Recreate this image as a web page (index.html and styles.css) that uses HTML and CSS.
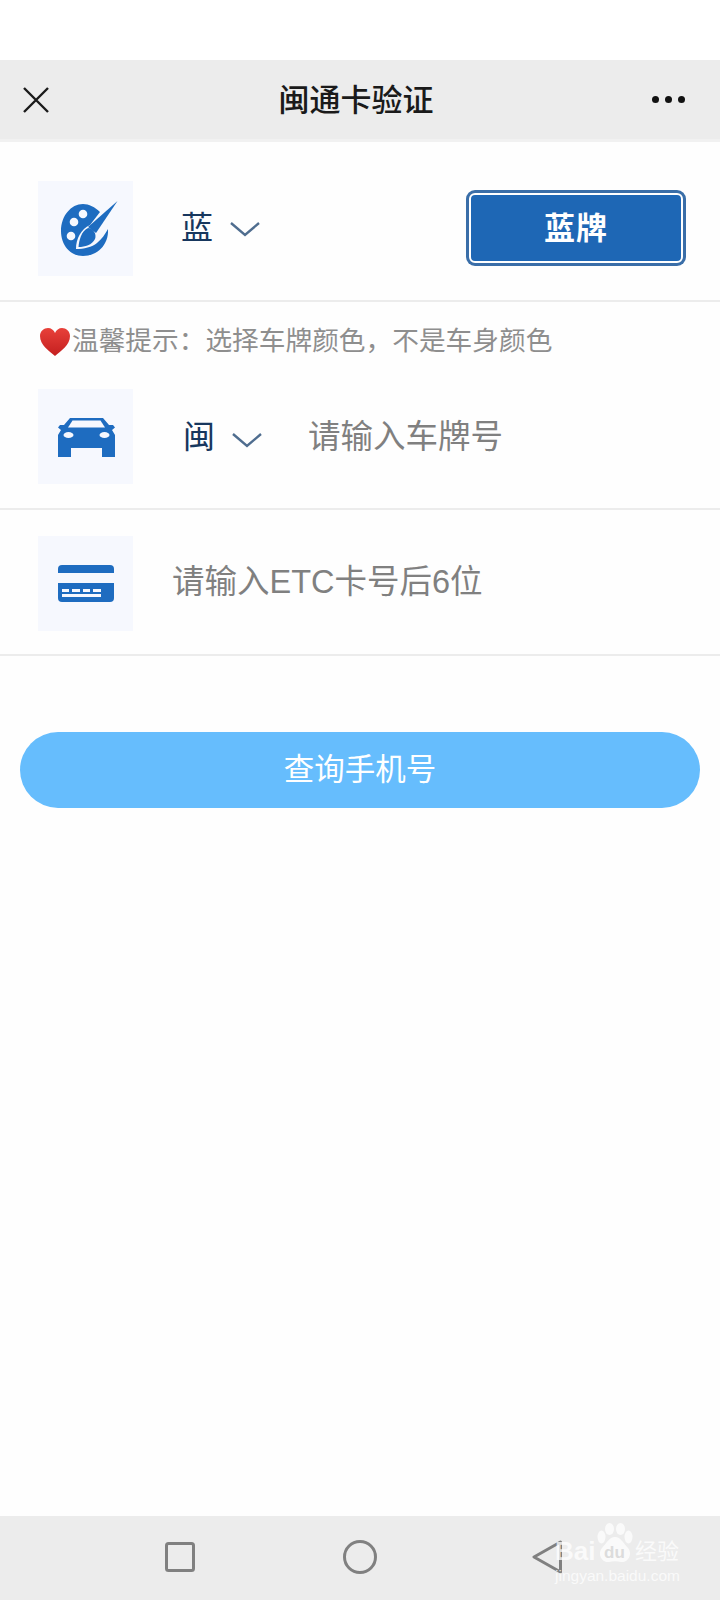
FILE: index.html
```html
<!DOCTYPE html>
<html>
<head>
  <meta charset="UTF-8">
  <title>闽通卡验证</title>
  <link rel="stylesheet" href="styles.css">
</head>
<body>
  <div class="status-space"></div>

  <!-- Title bar -->
  <div class="nav-bar">
    <svg class="nav-close" viewBox="0 0 26 26"><path d="M1 1L25 25M25 1L1 25" stroke="#1a1a1a" stroke-width="2.400" fill="none"/></svg>
    <div class="nav-title">闽通卡验证</div>
    <div class="nav-more"><span></span><span></span><span></span></div>
  </div>

  <!-- Plate colour -->
  <div class="row row-color">
    <div class="icon-box">
      <svg class="icon-palette" viewBox="0 0 57 55">
        <path d="M22 3C28 3 34 6 39 11L29 24C20 28 15 38 15 48C23 48 31 46 36 42C41 38 44 33 47 28C48 44 36 55 22 55C9 55 0 44 0 30C0 15 10 3 22 3Z" fill="#1e6cc0"/>
        <circle cx="22" cy="13" r="4.300" fill="#f6f8fe"/>
        <circle cx="13" cy="21" r="4.300" fill="#f6f8fe"/>
        <circle cx="10" cy="35" r="4.300" fill="#f6f8fe"/>
        <path d="M56.500 0L35 32L27 26Z" fill="#1e6cc0"/>
        <path d="M27 27C32 27 36 33 34 38C31 44 24 46 17.500 46C18 40 20 30 27 27Z" fill="#1e6cc0"/>
      </svg>
    </div>
    <span class="select-value select-blue">蓝</span>
    <svg class="chevron" viewBox="0 0 30 15"><path d="M1 1L15 13L29 1" stroke="#4f6d8f" stroke-width="2.400" fill="none"/></svg>
    <div class="plate-btn"><span>蓝牌</span></div>
  </div>

  <div class="hint">
    <svg class="hint-heart" viewBox="0 0 30 28">
      <defs>
        <linearGradient id="heartFill" x1="0" y1="0" x2="0" y2="1">
          <stop offset="0" stop-color="#e8413a"/>
          <stop offset="1" stop-color="#c41f1f"/>
        </linearGradient>
      </defs>
      <path d="M15 28C9 23 0 17 0 8C0 3 4 0 8 0C11 0 14 2 15 5C16 2 19 0 22 0C26 0 30 3 30 8C30 17 21 23 15 28Z" fill="url(#heartFill)"/>
    </svg>
    <span>温馨提示：选择车牌颜色，不是车身颜色</span>
  </div>

  <!-- Plate number -->
  <div class="row row-plate">
    <div class="icon-box">
      <svg class="icon-car" viewBox="0 0 57 39">
        <path d="M12 0H45L51 7H55L57 9.500L54 12L57 17V39H44V30H13V39H0V17L3 12L0 9.500L2 7H6Z" fill="#1e6cc0"/>
        <path d="M14.500 2.500H42.500L47 9.500H10Z" fill="#f6f8fe"/>
        <ellipse cx="10.500" cy="17" rx="5" ry="3" fill="#f6f8fe"/>
        <ellipse cx="46.500" cy="17" rx="5" ry="3" fill="#f6f8fe"/>
      </svg>
    </div>
    <span class="select-value select-province">闽</span>
    <svg class="chevron chevron-low" viewBox="0 0 30 15"><path d="M1 1L15 13L29 1" stroke="#4f6d8f" stroke-width="2.400" fill="none"/></svg>
    <span class="placeholder placeholder-plate">请输入车牌号</span>
  </div>

  <!-- ETC card number -->
  <div class="row row-card">
    <div class="icon-box">
      <svg class="icon-card" viewBox="0 0 56 37">
        <rect width="56" height="37" rx="4" fill="#1e6cc0"/>
        <rect y="8" width="56" height="10" fill="#f6f8fe"/>
        <rect x="4" y="24" width="7" height="3" fill="#f6f8fe"/>
        <rect x="14" y="24" width="8" height="3" fill="#f6f8fe"/>
        <rect x="25" y="24" width="7" height="3" fill="#f6f8fe"/>
        <rect x="35" y="24" width="8" height="3" fill="#f6f8fe"/>
        <rect x="4" y="29" width="39" height="3" fill="#f6f8fe"/>
      </svg>
    </div>
    <span class="placeholder placeholder-card">请输入ETC卡号后6位</span>
  </div>

  <div class="submit-btn"><span>查询手机号</span></div>

  <div class="spacer"></div>

  <!-- Android nav keys -->
  <div class="system-bar">
    <svg class="key key-square" viewBox="0 0 30 30"><rect x="1.500" y="1.500" width="27" height="27" rx="2" stroke="#808080" stroke-width="3" fill="none"/></svg>
    <svg class="key key-circle" viewBox="0 0 34 34"><circle cx="17" cy="17" r="15.500" stroke="#808080" stroke-width="3" fill="none"/></svg>
    <svg class="key key-back" viewBox="0 0 30 34"><path d="M28.500 2L2 17L28.500 32Z" stroke="#808080" stroke-width="3" stroke-linejoin="round" fill="none"/></svg>
  </div>

  <!-- Image watermark -->
  <div class="watermark">
    <span class="wm-bai">Bai</span>
    <div class="wm-logo">
      <svg class="wm-paw" viewBox="0 0 36 40">
        <g fill="#fff" fill-opacity="0.75">
          <ellipse cx="4.500" cy="14" rx="4" ry="6.500"/>
          <ellipse cx="12.500" cy="6" rx="4.500" ry="6"/>
          <ellipse cx="23.500" cy="6" rx="4.500" ry="6"/>
          <ellipse cx="31.500" cy="14" rx="4" ry="6.500"/>
          <path d="M18 14C24 14 26 20 31 25C36 31 31 40 24 39C20 38 16 38 12 39C5 40 0 31 5 25C10 20 12 14 18 14Z"/>
        </g>
      </svg>
      <span class="wm-du">du</span>
    </div>
    <span class="wm-jy">经验</span>
    <div class="wm-url">jingyan.baidu.com</div>
  </div>
</body>
</html>
```

FILE: styles.css
```css
/* Global Styles */
html, body {
  margin: 0;
  padding: 0;
}
body {
  position: relative;
  width: 720px;
  height: 1600px;
  display: flex;
  flex-direction: column;
  background-color: #fefefe;
  font-family: "Liberation Sans", "Noto Sans CJK SC", sans-serif;
  overflow: hidden;
}
.status-space {
  height: 60px;
  background-color: #fff;
}
/* Title bar */
.nav-bar {
  height: 82px;
  padding: 0 35px 0 23px;
  display: flex;
  align-items: center;
  justify-content: space-between;
  background-color: #ececec;
  border-bottom: 3px solid #f1f1f1;
  box-sizing: border-box;
}
.nav-close {
  width: 26px;
  height: 26px;
}
.nav-title {
  font-size: 31px;
  font-weight: 500;
  color: #1a1a1a;
  margin-left: 11px;
  margin-bottom: 4px;
}
.nav-more {
  display: flex;
  gap: 6px;
}
.nav-more span {
  width: 7px;
  height: 7px;
  border-radius: 50%;
  background-color: #111;
}
/* Form rows */
.row {
  display: flex;
  align-items: center;
  padding-left: 38px;
  border-bottom: 2px solid #ececec;
}
.row-color {
  padding-top: 39px;
  padding-bottom: 24px;
}
.row-plate {
  padding-top: 22px;
  padding-bottom: 24px;
}
.row-card {
  padding-top: 26px;
  padding-bottom: 23px;
}
.icon-box {
  width: 95px;
  height: 95px;
  display: flex;
  align-items: center;
  justify-content: center;
  flex-shrink: 0;
  background-color: #f6f8fe;
}
.icon-palette {
  width: 57px;
  height: 55px;
  margin-left: 7px;
}
.icon-car {
  width: 57px;
  height: 39px;
  margin-top: 2px;
  margin-left: 2px;
}
.icon-card {
  width: 56px;
  height: 37px;
}
.select-value {
  font-size: 32px;
  color: #17375e;
  line-height: 1;
}
.select-blue {
  margin-left: 48px;
  margin-bottom: 2px;
}
.select-province {
  margin-left: 50px;
}
.chevron {
  width: 30px;
  height: 15px;
  margin-left: 17px;
  margin-top: 2px;
}
.chevron-low {
  margin-top: 8px;
}
.plate-btn {
  width: 214px;
  height: 70px;
  margin-left: auto;
  margin-right: 37px;
  margin-bottom: 2px;
  box-sizing: border-box;
  display: flex;
  align-items: center;
  justify-content: center;
  background-color: #1e67b5;
  border: 2px solid #fff;
  border-radius: 6px;
  box-shadow: 0 0 0 3px #3a6ea8;
  color: #fff;
  font-size: 31px;
  font-weight: 700;
}
.plate-btn span {
  letter-spacing: 1px;
  margin-bottom: 4px;
}
.hint {
  height: 65px;
  padding-left: 40px;
  display: flex;
  align-items: center;
  color: #8e8e8e;
  font-size: 26.700px;
}
.hint span {
  margin-top: 8px;
}
.hint-heart {
  width: 30px;
  height: 28px;
  margin-right: 2px;
  margin-top: 14px;
}
.placeholder {
  font-size: 32.500px;
  color: #808080;
  line-height: 1;
}
.placeholder-plate {
  margin-left: 46px;
  margin-top: 2px;
}
.placeholder-card {
  margin-left: 39px;
  margin-bottom: 2px;
}
.submit-btn {
  height: 76px;
  margin: 76px 20px 0;
  border-radius: 38px;
  display: flex;
  align-items: center;
  justify-content: center;
  background-color: #66bdfd;
  color: #fff;
  font-size: 30.500px;
}
.submit-btn span {
  margin-bottom: 6px;
}
.spacer {
  flex: 1;
}
/* System keys */
.system-bar {
  position: relative;
  height: 84px;
  background-color: #ececec;
}
.key {
  position: absolute;
}
.key-square {
  left: 165px;
  top: 26px;
  width: 30px;
  height: 30px;
}
.key-circle {
  left: 343px;
  top: 24px;
  width: 34px;
  height: 34px;
}
.key-back {
  left: 532px;
  top: 24px;
  width: 30px;
  height: 34px;
}
/* Watermark */
.watermark {
  position: absolute;
  left: 555px;
  top: 1523px;
  width: 126px;
  display: flex;
  flex-wrap: wrap;
  align-items: flex-end;
  color: rgba(255, 255, 255, 0.75);
}
.wm-bai {
  width: 42px;
  font-size: 26px;
  font-weight: 700;
  line-height: 1;
  margin-bottom: -1px;
}
.wm-logo {
  position: relative;
  width: 36px;
  height: 40px;
}
.wm-paw {
  display: block;
  width: 36px;
  height: 40px;
}
.wm-du {
  position: absolute;
  left: 7px;
  bottom: 0;
  color: #dcdcdc;
  font-size: 17px;
  font-weight: 700;
}
.wm-jy {
  width: 44px;
  margin-left: 2px;
  font-size: 22px;
  line-height: 1;
  white-space: nowrap;
}
.wm-url {
  width: 126px;
  margin-top: 5px;
  font-size: 15.500px;
  line-height: 1;
  white-space: nowrap;
}
```
